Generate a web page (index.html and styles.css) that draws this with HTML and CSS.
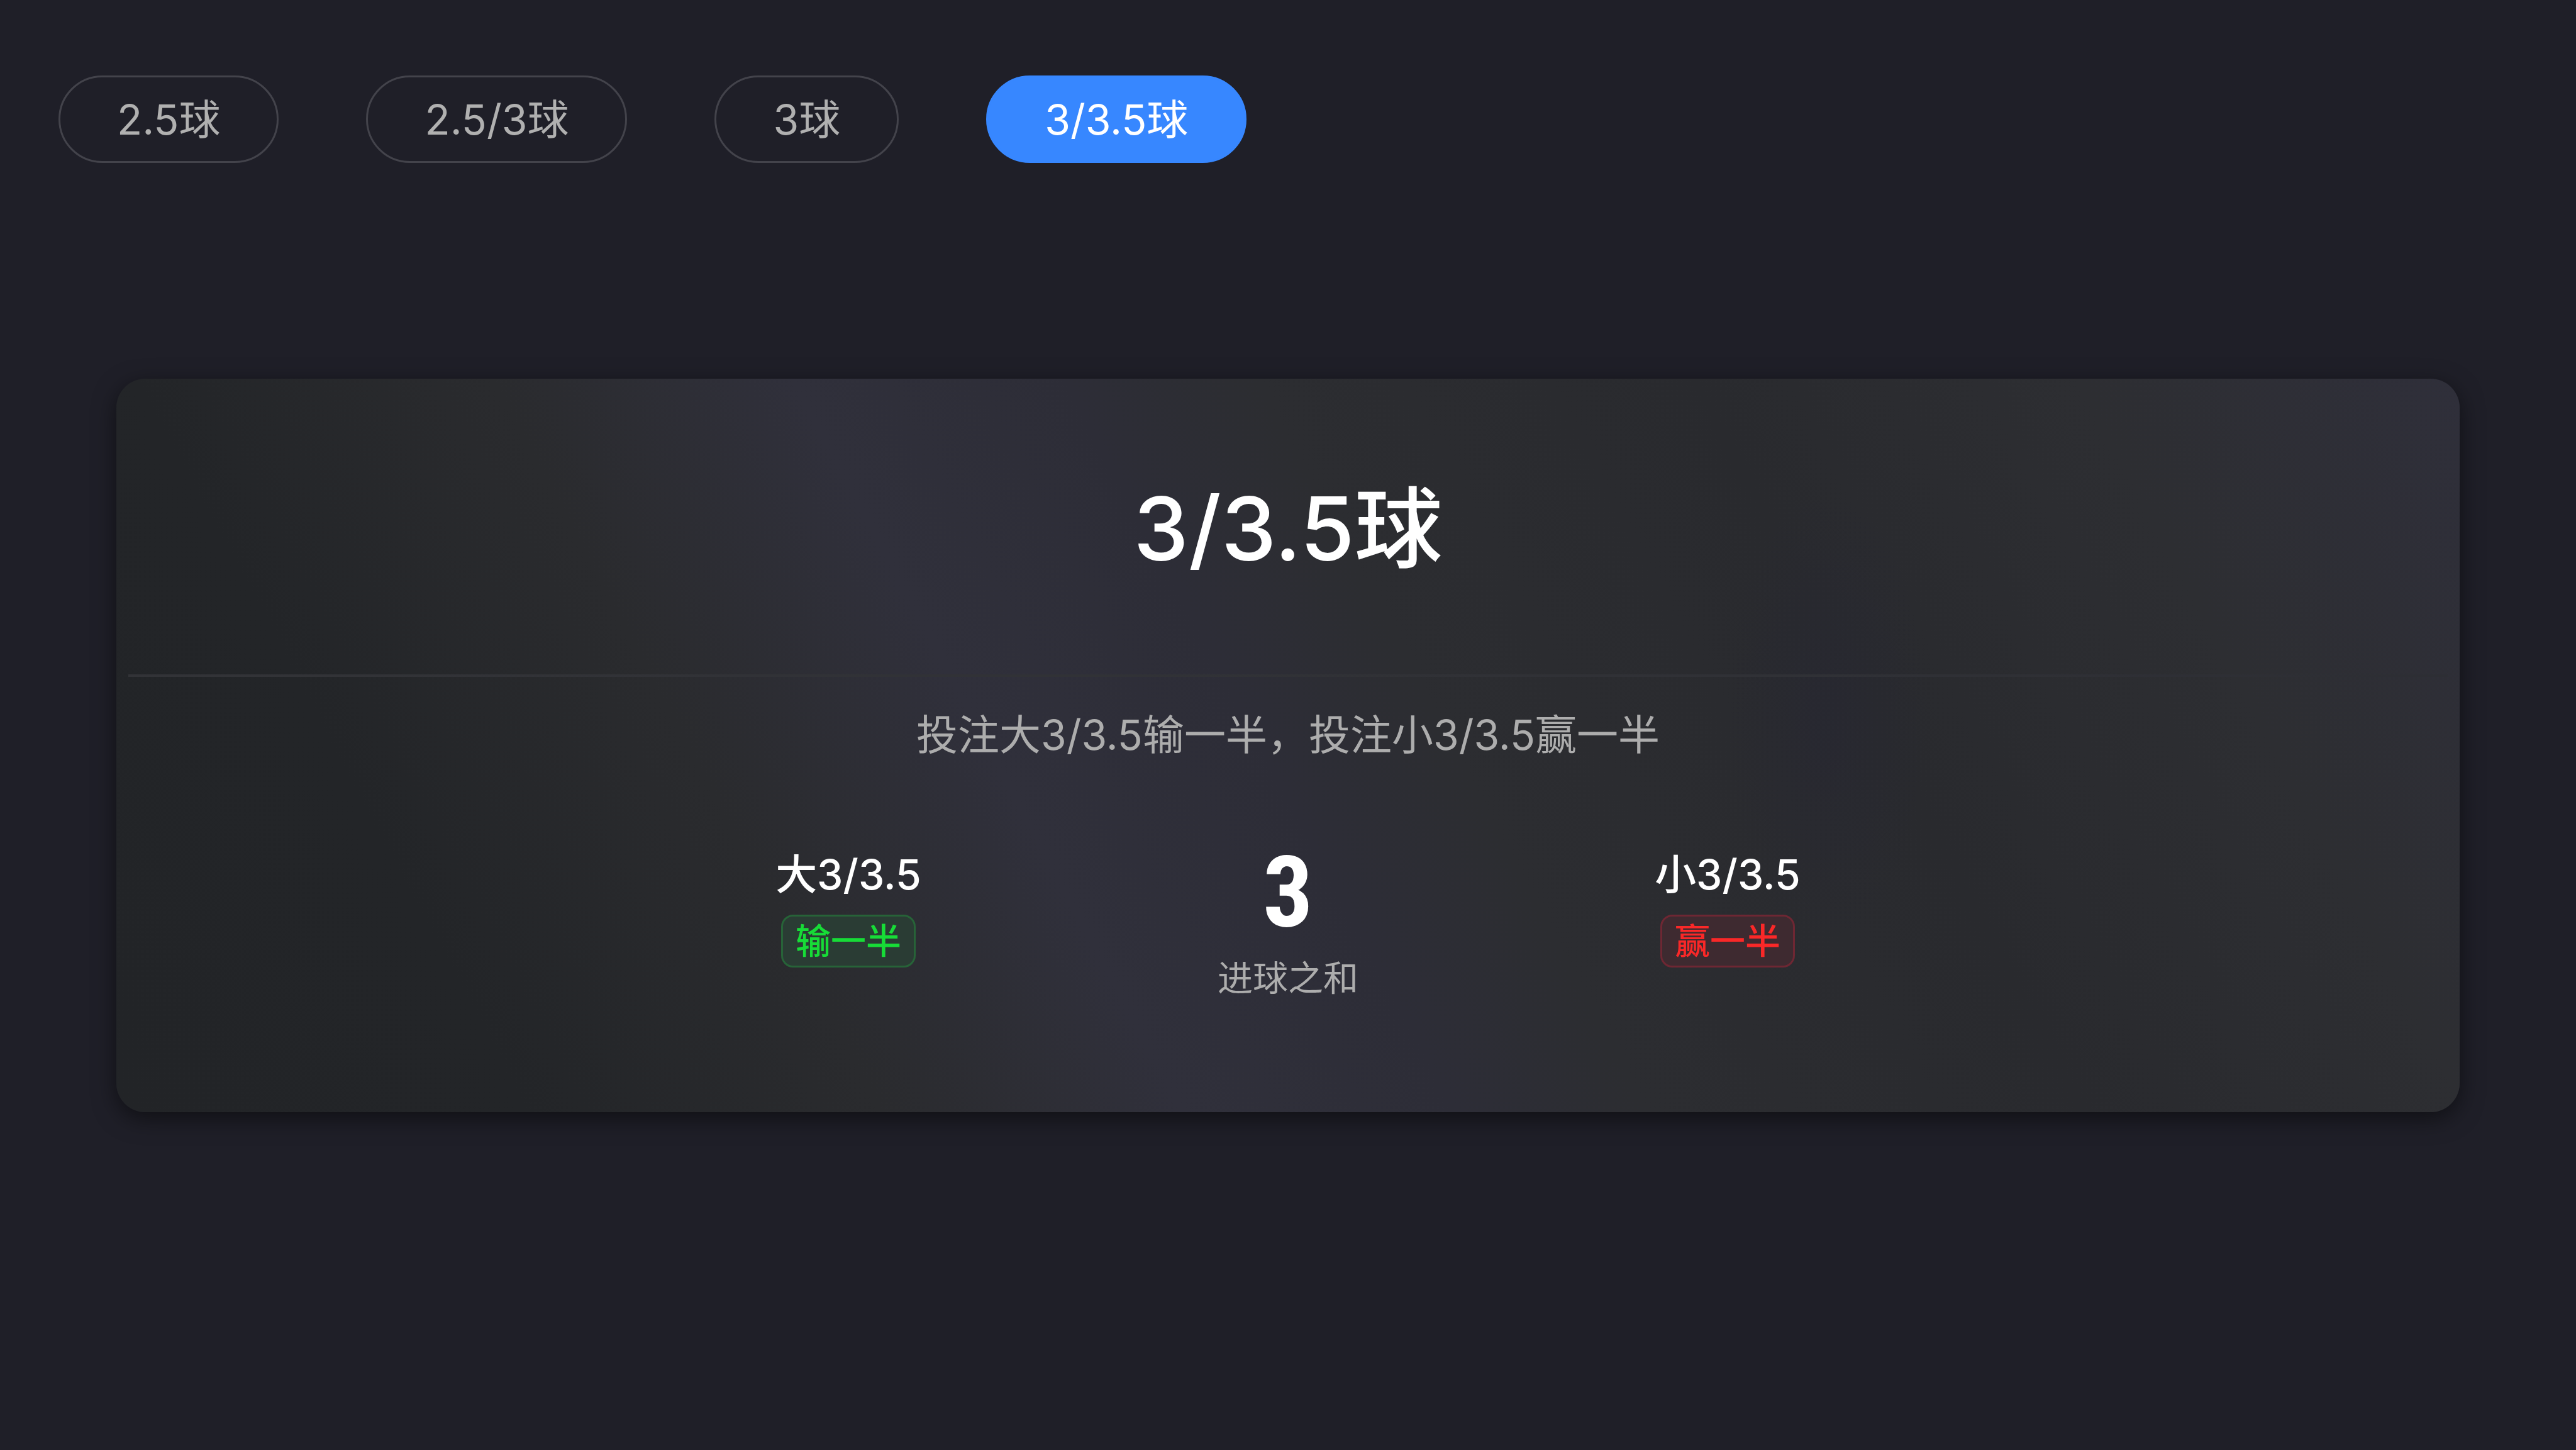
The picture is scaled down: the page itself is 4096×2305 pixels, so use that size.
FILE: index.html
```html
<!DOCTYPE html>
<html lang="zh-CN">
<head>
  <meta charset="utf-8">
  <meta name="viewport" content="width=device-width, initial-scale=1">
  <title>3/3.5球</title>
  <link rel="stylesheet" href="styles.css">
</head>
<body>
  <nav class="chips">
    <button class="chip" type="button">2.5球</button>
    <button class="chip" type="button">2.5/3球</button>
    <button class="chip" type="button">3球</button>
    <button class="chip chip-active" type="button" aria-pressed="true">3/3.5球</button>
  </nav>
  <main class="card">
    <h1 class="card-title">3/3.5球</h1>
    <hr class="divider">
    <p class="summary">投注大3/3.5输一半，投注小3/3.5赢一半</p>
    <div class="result">
      <section class="side">
        <h2 class="side-name">大3/3.5</h2>
        <span class="tag tag-lose">输一半</span>
      </section>
      <section class="total">
        <strong class="total-value">3</strong>
        <span class="total-label">进球之和</span>
      </section>
      <section class="side">
        <h2 class="side-name">小3/3.5</h2>
        <span class="tag tag-win">赢一半</span>
      </section>
    </div>
  </main>
</body>
</html>
```

FILE: styles.css
```css
* {
  box-sizing: border-box;
}

body {
  margin: 0;
  min-height: 100vh;
  background: #1f1f28;
  color: #fff;
  font-family: Inter, "Noto Sans CJK SC", sans-serif;
  font-size: 66px;
  line-height: 92px;
}

h1,
h2,
p {
  margin: 0;
}

.chips {
  display: flex;
  flex-wrap: wrap;
  gap: 139px;
  padding: 120px 93px 0;
}

.chip {
  height: 139px;
  padding: 0 90px;
  border: 3px solid #43434b;
  border-radius: 70px;
  background: transparent;
  color: #b0b0b0;
  font: inherit;
}

.chip-active {
  border-color: #3787ff;
  background: #3787ff;
  color: #fff;
}

.card {
  margin: 343px 185px 0;
  padding-bottom: 174px;
  border-radius: 46px;
  background:
    radial-gradient(ellipse 160px 360px at 73% 46%, rgba(37, 37, 52, 0.4), transparent),
    linear-gradient(62deg, #222427 0%, #232528 15%, #2a2b2e 28%, #30303b 39%, #2d2d37 49%, #2c2d31 56%, #292a2e 72%, #2d2e32 86%, #2f2f3a 100%);
  box-shadow: 0 10px 36px rgba(0, 0, 0, 0.5);
  text-align: center;
}

.card-title {
  padding: 141px 0 135px;
  font-size: 140px;
  font-weight: 500;
  line-height: 194px;
}

.divider {
  height: 4px;
  margin: 0 19px;
  border: 0;
  background: linear-gradient(90deg, #323337, #303136 70%, #2d2e34);
}

.summary {
  margin-top: 46px;
  color: #adadad;
}

.result {
  display: grid;
  grid-template-columns: repeat(3, 1fr);
  max-width: 2097px;
  margin: 130px auto 0;
}

.side,
.total {
  display: flex;
  flex-direction: column;
  align-items: center;
}

.side {
  gap: 18px;
}

.side-name {
  font-size: 66px;
  font-weight: 500;
}

.tag {
  padding: 0 20px;
  border: 3px solid;
  border-radius: 19px;
  font-size: 56px;
  font-weight: 500;
  line-height: 78px;
}

.tag-lose {
  border-color: #276338;
  background: #2a3c34;
  color: #17dc37;
}

.tag-win {
  border-color: #6e2733;
  background: #3e2a30;
  color: #fa2828;
}

.total {
  gap: 24px;
}

.total-value {
  font-family: "Roboto Condensed", Roboto, "Liberation Sans", sans-serif;
  font-size: 158px;
  font-weight: 700;
  line-height: 148px;
}

.total-label {
  color: #adadad;
  font-size: 56px;
  line-height: 78px;
}
```
